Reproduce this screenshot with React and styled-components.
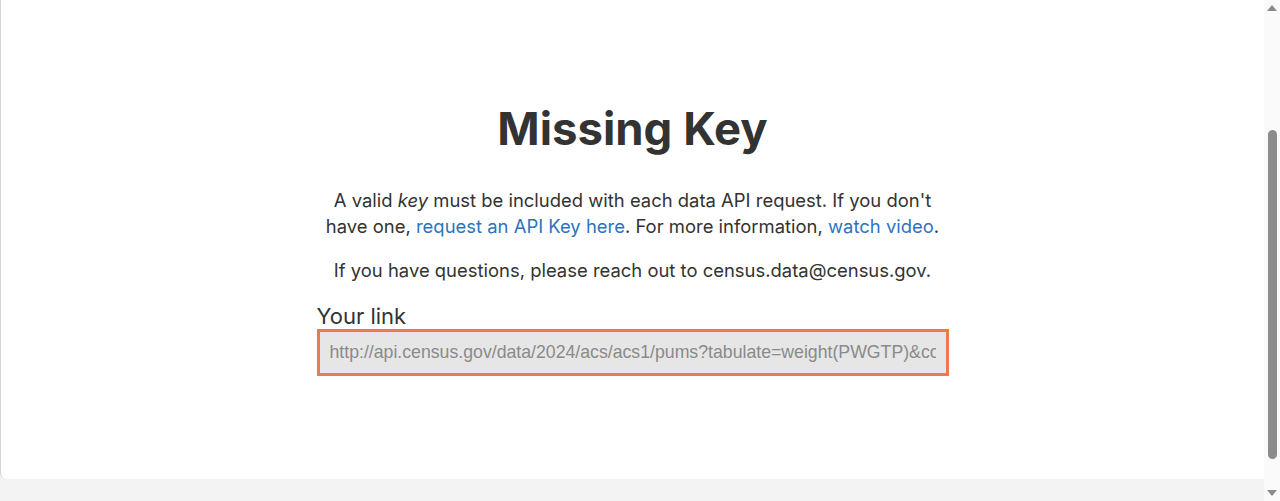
import styled, {createGlobalStyle} from "styled-components";

const GlobalStyle = createGlobalStyle`
  html, body {
    margin: 0;
    padding: 0;
    background: #f3f3f3;
    font-family: Inter, "Noto Sans", sans-serif;
    overflow: hidden;
  }
`

const LINK = "http://api.census.gov/data/2024/acs/acs1/pums?tabulate=weight(PWGTP)&col+SEX&row+AGEP"

export default function App() {
    return (
        <>
            <GlobalStyle/>
            <Frame>
                <Main>
                    <Panel>
                        <Content>
                            <Title>Missing Key</Title>
                            <Paragraph>
                                A valid <em>key</em> must be included with each data API request. If you don't
                                have one, <Link href="#">request an API Key here</Link>. For more information,{" "}
                                <Link href="#">watch video</Link>.
                            </Paragraph>
                            <Paragraph>
                                If you have questions, please reach out to census.data@census.gov.
                            </Paragraph>
                            <Label htmlFor="your-link">Your link</Label>
                            <LinkInput id="your-link" readOnly value={LINK}/>
                        </Content>
                    </Panel>
                    <Footer/>
                </Main>

                <Scrollbar>
                    <Arrow/>
                    <Track>
                        <Thumb/>
                    </Track>
                    <Arrow $down/>
                </Scrollbar>
            </Frame>
        </>
    )
}

const Frame = styled.div`
  display: flex;
  height: 501px;
  width: 1280px;
`
const Main = styled.div`
  flex: 1;
  display: flex;
  flex-direction: column;
`
const Panel = styled.section`
  height: 479px;
  background: #fff;
  border-left: 1px solid #d4d4d4;
  border-bottom-left-radius: 6px;
  box-sizing: border-box;
  display: flex;
  justify-content: center;
`
const Content = styled.div`
  width: 632px;
  padding-top: 101px;
  color: #333;
`
const Title = styled.h1`
  margin: 0 0 31px;
  font-size: 45.5px;
  line-height: 55px;
  font-weight: 700;
  text-align: center;
  color: #333;
`
const Paragraph = styled.p`
  margin: 0 0 18px;
  padding: 0 4px;
  font-size: 18.45px;
  line-height: 26px;
  text-align: center;

  em {
    font-style: italic;
  }
`
const Link = styled.a`
  color: #2f73c0;
  text-decoration: none;
`
const Label = styled.label`
  display: block;
  padding-top: 3px;
  font-size: 22px;
  line-height: 25px;
  color: #333;
`
const LinkInput = styled.input`
  display: block;
  width: 100%;
  height: 47px;
  box-sizing: border-box;
  margin: 0;
  padding: 0 10px;
  border: 3px solid #f07850;
  background: #e6e6e6;
  font-family: "Liberation Sans", Arial, sans-serif;
  font-size: 17.7px;
  color: #8a8a8a;
  outline: none;
`
const Footer = styled.div`
  flex: 1;
  background: #f3f3f3;
`
const Scrollbar = styled.aside`
  width: 16px;
  background: #fafafa;
  display: flex;
  flex-direction: column;
  align-items: center;
`
const Arrow = styled.div`
  width: 0;
  height: 0;
  margin: 5px 0;
  border-left: 5px solid transparent;
  border-right: 5px solid transparent;
  ${p => p.$down
    ? "border-top: 6px solid #8a8a8a;"
    : "border-bottom: 6px solid #8a8a8a;"}
`
const Track = styled.div`
  flex: 1;
  width: 100%;
  display: flex;
  justify-content: center;
  padding: 114px 0 26px;
  box-sizing: border-box;
`
const Thumb = styled.div`
  width: 9px;
  border-radius: 5px;
  background: #8c8c8c;
`
